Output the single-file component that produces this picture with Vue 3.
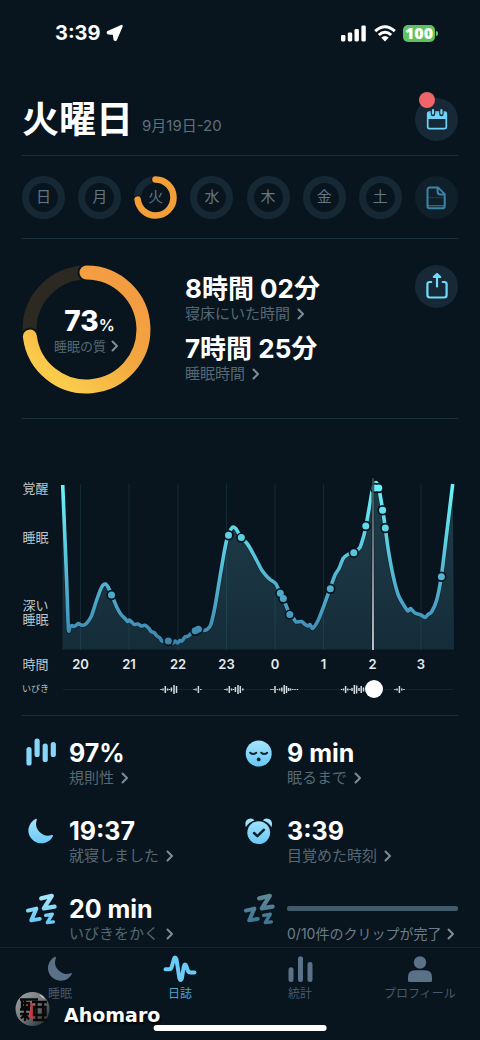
<script setup>
import { ref } from 'vue'

const days = ['日', '月', '火', '水', '木', '金', '土']
const activeDay = ref(2)
const position = ref(81)

const hours = [
  { x: 80.5, t: '20' }, { x: 129, t: '21' }, { x: 178, t: '22' }, { x: 226.5, t: '23' },
  { x: 275, t: '0' }, { x: 323.5, t: '1' }, { x: 372.5, t: '2' }, { x: 421, t: '3' }
]

const pts = [
  [62.7, 485], [64.7, 533], [66.7, 582], [68.4, 629], [70, 627], [72, 625.5], [74, 626.5], [76.5, 625], [78.5, 623.5], [81, 625],
  [85, 624.7], [88.5, 621], [91.7, 615.3], [96.7, 600], [101.7, 587], [105.5, 584], [108.3, 587.5], [111.7, 595],
  [116.7, 607], [121, 614.5], [125, 618.5], [127.5, 621.5], [129, 620], [131.5, 622], [134.3, 624.5], [138, 624], [141, 626],
  [145, 625.3], [149, 628.5], [151, 631.5], [154, 632.5], [157, 636], [160, 638], [162, 641], [168, 641.5], [173, 643], [175, 641],
  [177.7, 643], [180, 640.5], [182, 641], [185, 637], [188.5, 636], [192, 632.5], [196.7, 630], [203, 630.5], [207, 629.5],
  [210.7, 625], [215, 606.7], [220, 576.7], [224, 553.3], [226.7, 540], [228.6, 534], [232.3, 527.3], [235.7, 528.5], [239, 534],
  [241.7, 537.7], [246.7, 543], [250, 548], [253.3, 554], [257, 561], [261.7, 570], [266, 575.5], [270, 579.5], [276, 584],
  [280, 593.3], [283.3, 598.7], [289.7, 614.3], [294, 619], [296, 622], [301.7, 621.5], [304.5, 624], [308, 626], [310, 624.5],
  [312.7, 628.3], [318.3, 620], [323.3, 607.3], [330, 588.7], [335, 575], [339, 568.5], [343.3, 558.3], [348.3, 554.3],
  [354, 552.3], [360, 547.3], [364, 535], [366, 526], [370, 503.3], [372.7, 488.3], [376, 482.5], [378.7, 488],
  [382.7, 510], [385.3, 528], [388.3, 550], [393.3, 576.7], [398.3, 595], [404, 605.5], [408, 611], [410.5, 608.5], [415, 613],
  [421, 615], [425.3, 617.5], [428, 614.5], [431.7, 611.7], [436.7, 600], [441.3, 576.7], [446.7, 533.3], [452.7, 484]
]

function smooth(p) {
  let d = `M${p[0][0]} ${p[0][1]}`
  for (let i = 0; i < p.length - 1; i++) {
    const a = p[i - 1] || p[i]
    const b = p[i]
    const c = p[i + 1]
    const e = p[i + 2] || c
    const k = 8
    d += ` C${b[0] + (c[0] - a[0]) / k} ${b[1] + (c[1] - a[1]) / k} ${c[0] - (e[0] - b[0]) / k} ${c[1] - (e[1] - b[1]) / k} ${c[0]} ${c[1]}`
  }
  return d
}
const line = smooth(pts)
const area = `${line} L454 649.5 L62.5 649.5 Z`

const dots = [
  [111.5, 595], [168.3, 641], [195.2, 630.8], [198.4, 629.2], [228.5, 535.3], [241.3, 537.6], [280.3, 593.2],
  [283.3, 598.6], [289.8, 614.6], [330.3, 588.7], [353.8, 552.7], [365.8, 526], [375, 488], [378.8, 488],
  [382.6, 510.2], [385.3, 528], [441.4, 576.8]
]

const snores = [
  [161, 1], [163, 2], [165.3, 7], [167.6, 2], [169.5, 1], [171.4, 4], [174, 9], [176.5, 7],
  [194, 1], [196, 2], [198.4, 7], [200.8, 1],
  [225, 1], [227, 2], [229.3, 7], [231.6, 2], [233.5, 1], [235.4, 5], [238, 9], [240.3, 7], [242.8, 2],
  [271, 1], [273, 1], [275, 7], [277.4, 1], [279.6, 2], [281.8, 4], [284.2, 9], [286.5, 7], [288.6, 3], [290.6, 2], [292.8, 1], [295, 1], [297.4, 1],
  [341.5, 1], [343.5, 2], [345.6, 7], [347.8, 2], [350, 1], [352, 3], [354.3, 9], [356.6, 8], [359, 3], [361.2, 7], [363.5, 4],
  [395, 1], [397, 2], [399.4, 7], [401.8, 2], [404, 1]
]

const metrics = [
  { icon: 'bars', value: '97%', label: '規則性' },
  { icon: 'face', value: '9 min', label: '眠るまで' },
  { icon: 'moon', value: '19:37', label: '就寝しました' },
  { icon: 'alarm', value: '3:39', label: '目覚めた時刻' },
  { icon: 'zzz', value: '20 min', label: 'いびきをかく' },
  { icon: 'zzz', dim: true, label: '0/10件のクリップが完了' }
]

const tabs = [
  { icon: 'moon', label: '睡眠' },
  { icon: 'pulse', label: '日誌', active: true },
  { icon: 'stats', label: '統計' },
  { icon: 'person', label: 'プロフィール' }
]
</script>

<template>
  <div class="app">
    <div class="status">
      <div class="clock">
        <span>3:39</span>
        <svg width="18" height="18" viewBox="0 0 18 18"><path d="M15.600 2 L2 8.200 Q1.500 9.200 2.600 9.300 L8 9.800 L8.600 15.200 Q9 16.400 9.800 15.400 Z" fill="#fff" stroke="#fff" stroke-width="2.400" stroke-linejoin="round" /></svg>
      </div>
      <div class="signals">
        <svg width="26" height="17" viewBox="0 0 26 17" fill="#fff">
          <rect x="0" y="10" width="4.4" height="6.4" rx="1.3" /><rect x="6.8" y="7.4" width="4.4" height="9" rx="1.3" />
          <rect x="13.5" y="4" width="4.4" height="12.4" rx="1.3" /><rect x="20.4" y="0.4" width="4.4" height="16" rx="1.3" />
        </svg>
        <svg width="22" height="17" viewBox="0 0 22 17" fill="none" stroke="#fff" stroke-width="3">
          <path d="M1.2 6.2 Q11 -2.7 20.8 6.2" /><path d="M4.8 10 Q11 4.4 17.2 10" />
          <path d="M11 16.4 L7.2 12.6 Q11 9.6 14.8 12.6Z" fill="#fff" stroke="none" />
        </svg>
        <div class="battery"><span>100</span></div>
      </div>
    </div>

    <main class="content">
      <header class="head">
        <h1>火曜日</h1>
        <span class="date">9月19日-20</span>
        <button class="round" aria-label="カレンダー">
          <svg width="24" height="24" viewBox="0 0 24 24">
            <rect x="2.700" y="4" width="18.600" height="16.600" rx="1.600" fill="none" stroke="#6fd3fa" stroke-width="1.700" />
            <path d="M2.500 4.500h19v6.500h-19z" fill="#6fd3fa" />
            <path d="M8 1.500v4.500M16.400 1.500v4.500" stroke="#172936" stroke-width="4.400" stroke-linecap="round" />
            <path d="M8 2.200v3.400M16.400 2.200v3.400" stroke="#6fd3fa" stroke-width="2.200" stroke-linecap="round" />
          </svg>
          <i class="badge"></i>
        </button>
      </header>

      <nav class="days">
        <button v-for="(d, i) in days" :key="d" class="day" @click="activeDay = i">
          <svg width="43" height="43" viewBox="0 0 43 43" fill="none">
            <circle cx="21.5" cy="21.5" r="18" stroke="#172835" stroke-width="7" />
            <g v-if="i === activeDay" transform="rotate(-90 21.5 21.5)" stroke-linecap="round">
              <circle cx="21.5" cy="21.5" r="18" stroke="#08151e" stroke-width="9" pathLength="100" stroke-dasharray="73 100" />
              <circle cx="21.5" cy="21.5" r="18" stroke="#f49e38" stroke-width="6.6" pathLength="100" stroke-dasharray="73 100" />
            </g>
          </svg>
          <span>{{ d }}</span>
        </button>
        <button class="round faint" aria-label="メモ">
          <svg width="24" height="26" viewBox="0 0 24 26" fill="none" stroke="#3f83a5" stroke-width="2" stroke-linejoin="round">
            <path d="M5.500 2.600h8.700l6.500 6.500v12.100a2 2 0 0 1-2 2H5.500a2 2 0 0 1-2-2V4.600a2 2 0 0 1 2-2z" />
            <path d="M13.600 2.800v4q0 2.600 2.600 2.600h4.200" />
            <path d="M4.500 12.600h15.400" stroke-width="1" stroke-dasharray="1 1" opacity=".6" />
            <path d="M4 20.800h16" stroke-width="1" />
          </svg>
        </button>
      </nav>

      <section class="summary">
        <div class="ring">
          <svg width="129" height="129" viewBox="0 0 129 129" fill="none">
            <defs>
              <linearGradient id="quality" gradientUnits="userSpaceOnUse" x1="90" y1="20" x2="25" y2="105">
                <stop offset="0" stop-color="#f39d42" /><stop offset=".45" stop-color="#f2a73e" /><stop offset="1" stop-color="#fbcb4c" />
              </linearGradient>
            </defs>
            <circle cx="64.5" cy="64.5" r="57" stroke="#2c2923" stroke-width="14" />
            <path d="M64.5 7.5 A57 57 0 1 1 7.9 71.6" stroke="#08151e" stroke-width="18" stroke-linecap="round" />
            <path d="M64.5 7.5 A57 57 0 1 1 7.9 71.6" stroke="url(#quality)" stroke-width="14" stroke-linecap="round" />
          </svg>
          <div class="ring-text">
            <p class="score">73<small>%</small></p>
            <button class="more small">睡眠の質<svg class="chev" viewBox="0 0 8 12"><path d="M1.5 1.5 6 6 1.5 10.5" /></svg></button>
          </div>
        </div>
        <div class="times">
          <p class="big">8時間 02分</p>
          <button class="more">寝床にいた時間<svg class="chev" viewBox="0 0 8 12"><path d="M1.5 1.5 6 6 1.5 10.5" /></svg></button>
          <p class="big second">7時間 25分</p>
          <button class="more">睡眠時間<svg class="chev" viewBox="0 0 8 12"><path d="M1.5 1.5 6 6 1.5 10.5" /></svg></button>
        </div>
        <button class="round" aria-label="共有">
          <svg width="24" height="28" viewBox="0 0 24 28" fill="none" stroke="#6fdcfb" stroke-width="2.200" stroke-linecap="round" stroke-linejoin="round">
            <path d="M6.200 9H4.600a2.200 2.200 0 0 0-2.200 2.200v10.900a2.400 2.400 0 0 0 2.400 2.400h14.400a2.400 2.400 0 0 0 2.400-2.400V11.200a2.200 2.200 0 0 0-2.200-2.200h-1.600" />
            <path d="M12 13.500V3" /><path d="M8.800 4 12 1l3.200 3z" fill="#6fdcfb" />
          </svg>
        </button>
      </section>

      <section class="chart">
        <svg class="plot" viewBox="22 470 436 206">
          <defs>
            <linearGradient id="stroke" gradientUnits="userSpaceOnUse" x1="0" y1="484" x2="0" y2="645">
              <stop offset="0" stop-color="#6cf3fa" /><stop offset=".35" stop-color="#5ccfe3" /><stop offset=".75" stop-color="#4ba3c5" /><stop offset="1" stop-color="#3b83ad" />
            </linearGradient>
            <linearGradient id="fill" gradientUnits="userSpaceOnUse" x1="0" y1="484" x2="0" y2="650">
              <stop offset="0" stop-color="#1d3d48" /><stop offset=".5" stop-color="#1a3541" /><stop offset="1" stop-color="#152c39" />
            </linearGradient>
            <linearGradient id="cursor" x1="0" y1="0" x2="0" y2="1">
              <stop offset="0" stop-color="#3a4a53" /><stop offset=".3" stop-color="#777d84" /><stop offset="1" stop-color="#eae6ea" />
            </linearGradient>
          </defs>
          <path :d="area" fill="url(#fill)" />
          <line v-for="h in hours" :key="h.t" :x1="h.x" :x2="h.x" y1="484" y2="650" class="grid" />
          <path :d="line" fill="none" stroke="#08151e" stroke-width="5" opacity=".5" />
          <path :d="line" fill="none" stroke="url(#stroke)" stroke-width="3.600" stroke-linejoin="round" />
          <circle v-for="(p, i) in dots" :key="'o' + i" :cx="p[0]" :cy="p[1]" r="5.200" fill="#08151e" />
          <circle v-for="(p, i) in dots" :key="'d' + i" :cx="p[0]" :cy="p[1]" r="3.500" fill="url(#stroke)" />
          <rect x="371.300" y="478" width="3" height="172" fill="#08151e" opacity=".6" />
          <rect x="372.200" y="478" width="1.600" height="172" fill="url(#cursor)" />
          <g class="axis">
            <text x="22.500" y="493">覚醒</text>
            <text x="22.500" y="542">睡眠</text>
            <text x="22.500" y="610">深い</text>
            <text x="22.500" y="624">睡眠</text>
            <text x="22.500" y="669">時間</text>
          </g>
          <g class="hours"><text v-for="h in hours" :key="h.t" :x="h.x" y="669">{{ h.t }}</text></g>
        </svg>
        <div class="snore">
          <label for="snore">いびき</label>
          <div class="track">
            <svg viewBox="62 676 392 26">
              <line x1="63" x2="453" y1="689.500" y2="689.500" stroke="#12242f" />
              <line v-for="(s, i) in snores" :key="i" :x1="s[0]" :x2="s[0]" :y1="689.500 - s[1] / 2" :y2="689.500 + s[1] / 2" class="wave" />
            </svg>
            <input id="snore" v-model="position" type="range" min="0" max="100">
          </div>
        </div>
      </section>

      <section class="metrics">
        <div v-for="m in metrics" :key="m.label" class="metric">
          <svg class="micon" :class="{ dim: m.dim }" width="36" height="36" viewBox="0 0 36 36">
            <defs>
              <linearGradient id="ice" gradientUnits="userSpaceOnUse" x1="0" y1="4" x2="0" y2="32">
                <stop offset="0" stop-color="#a4e4fb" /><stop offset="1" stop-color="#62c5f5" />
              </linearGradient>
            </defs>
            <g v-if="m.icon === 'bars'" stroke-width="5.200" stroke-linecap="round">
              <path d="M7 12.500v13.500M15.100 4v13.500M23.200 9v13.500M31.300 7.500v10" stroke="#86d6f9" />
            </g>
            <g v-else-if="m.icon === 'face'">
              <circle cx="18.700" cy="16.500" r="13" fill="url(#ice)" />
              <path d="M10.200 15.700q3 2.800 6 0M21.200 15.700q3 2.800 6 0" fill="none" stroke="#10222d" stroke-width="1.900" stroke-linecap="round" />
              <circle cx="18.700" cy="22.400" r="1.900" fill="#10222d" />
            </g>
            <path v-else-if="m.icon === 'moon'" d="M13.800 3.800A12.900 12.900 0 1 0 31 20.900 Q31.200 19.600 29.800 20 A12 12 0 0 1 14.800 4.700 Q14.900 3.500 13.800 3.800Z" fill="url(#ice)" />
            <g v-else-if="m.icon === 'alarm'">
              <path d="M5.800 12.300Q3.800 3.600 10.800 3.400q2.200.1 3.800 1.800Q8.700 7.200 5.800 12.300zM31.600 12.300q2-8.700-5-8.900-2.200.1-3.800 1.800 5.900 2 8.800 7.100z" fill="url(#ice)" />
              <circle cx="18.700" cy="17.600" r="11.400" fill="url(#ice)" />
              <path d="m14 18 3.400 3.200 6.400-6.400" fill="none" stroke="#0c202b" stroke-width="2.500" stroke-linecap="round" stroke-linejoin="round" />
            </g>
            <g v-else fill="none" stroke-linecap="round" stroke-linejoin="round" stroke="url(#ice)">
              <path d="M19.200 5.400 29.800 2.800 21.800 15.400 32.600 13.600" stroke-width="4.200" />
              <path d="M5.900 17.600 14.400 15.600 9.200 27.400 17.800 25.900" stroke-width="3.900" />
              <path d="M23.600 22.400 30.400 21.200 25.200 29.700 31.400 28.900" stroke-width="3.200" />
            </g>
          </svg>
          <div class="mtext">
            <p v-if="m.value" class="value">{{ m.value }}</p>
            <progress v-else value="0" max="10" :aria-label="m.label"></progress>
            <button class="more" :class="{ clips: !m.value }">{{ m.label }}<svg class="chev" viewBox="0 0 8 12"><path d="M1.500 1.500 6 6 1.500 10.500" /></svg></button>
          </div>
        </div>
      </section>
    </main>

    <footer class="bottom">
      <nav class="tabs">
        <button v-for="t in tabs" :key="t.label" class="tab" :class="{ active: t.active }">
          <svg width="34" height="28" viewBox="0 0 34 28">
            <path v-if="t.icon === 'moon'" d="M11.800 1.800A12.700 12.700 0 1 0 28.900 19 Q29 17.800 27.800 18.200 A11.800 11.800 0 0 1 12.900 2.900 Q13 1.500 11.800 1.800Z" fill="#5b7188" />
            <path v-else-if="t.icon === 'pulse'" d="M2.500 14.200H6.500Q8.200 14.200 9 11L10.800 4.500Q12 0.500 13.500 4.500L16.300 22.800Q17.600 27 19 22.800L20.800 11.500Q22 7.600 23.500 11.500L24.800 15.500Q25.600 17.500 27.500 17.500H31.500" fill="none" stroke="#6acbf9" stroke-width="4" stroke-linecap="round" stroke-linejoin="round" />
            <path v-else-if="t.icon === 'stats'" d="M8 14.700v9.800M17.500 3.700v20.800M27 9.500v15" stroke="#5b7188" stroke-width="5" stroke-linecap="round" />
            <g v-else fill="#5b7188"><circle cx="17" cy="7.500" r="6.200" /><path d="M5 25.500v-3.500Q5 15.300 12 15.300h10q7 0 7 6.700V25.500q0 1.500-1.500 1.500h-21Q5 27 5 25.500z" /></g>
          </svg>
          <span>{{ t.label }}</span>
        </button>
      </nav>
      <div class="home"></div>
      <div class="mark">
        <svg width="36" height="38" viewBox="0 0 36 38">
          <defs>
            <linearGradient id="metal" x1="0" y1="0" x2="1" y2="1">
              <stop offset="0" stop-color="#a0a5a8" /><stop offset=".5" stop-color="#74787b" /><stop offset="1" stop-color="#1e2022" />
            </linearGradient>
          </defs>
          <circle cx="17.500" cy="18" r="17" fill="url(#metal)" />
          <path d="M24 3.500q4 1 6 5z" fill="#eee" />
          <path d="M11 13h4l2 4-2 4 2 5h-5M17 11v17" fill="none" stroke="#d8303c" stroke-width="1.600" />
          <g fill="none" stroke="#09090a" stroke-width="2.300">
            <path d="M5 8.500h18M6 12h9M7 9v7h7v-5M5 18.500h10M10 9v21M5 23h9M6 27.500l4-4 4 5" />
            <path d="M17 11h15M18 29h14M21.500 12v17M28 12v17M19 16h11.500v8H19z" />
          </g>
        </svg>
        <span>Ahomaro</span>
      </div>
    </footer>
  </div>
</template>

<style>
body { background: #08151e; }
</style>

<style scoped>
* { box-sizing: border-box; }
.app {
  height: 100vh;
  display: flex;
  flex-direction: column;
  background: #08151e;
  color: #fff;
  font-family: Inter, "Noto Sans CJK JP", sans-serif;
  overflow: hidden;
}
h1, p { margin: 0; }
button {
  border: 0;
  padding: 0;
  background: none;
  color: inherit;
  font: inherit;
  cursor: pointer;
}
.status {
  flex: none;
  height: 66px;
  padding: 0 42px 0 55px;
  display: flex;
  justify-content: space-between;
  align-items: center;
}
.clock { display: flex; align-items: center; gap: 5px; font-size: 20px; font-weight: 700; }
.signals { display: flex; align-items: center; gap: 7px; }
.battery {
  position: relative;
  width: 32px;
  height: 17px;
  margin-right: 3px;
  border-radius: 5px;
  background: #5ec35c;
  font-family: "Open Sans", sans-serif;
  font-size: 16px;
  line-height: 17px;
  font-weight: 800;
  text-align: center;
}
.battery::after {
  content: "";
  position: absolute;
  right: -3px;
  top: 6px;
  width: 2px;
  height: 5px;
  border-radius: 0 2px 2px 0;
  background: #5ec35c;
}
.content { flex: 1; min-height: 0; overflow: hidden; padding: 0 22px; }
.head {
  height: 90px;
  padding: 32px 0 14px;
  border-bottom: 1px solid #1b2f3d;
  display: flex;
  align-items: center;
}
h1 { font-size: 37px; line-height: 40px; font-weight: 700; }
.date { margin: 12px 0 0 9px; font-size: 15px; line-height: 20px; color: #5e707d; }
.round {
  position: relative;
  flex: none;
  width: 43px;
  height: 43px;
  border-radius: 50%;
  background: #172936;
  display: grid;
  place-items: center;
}
.head .round { margin-left: auto; }
.faint { background: #0f202b; }
.badge {
  position: absolute;
  left: 4px;
  top: -6px;
  width: 16px;
  height: 16px;
  border-radius: 50%;
  background: #ef6569;
}
.days {
  padding: 20px 0 19px;
  border-bottom: 1px solid #1b2f3d;
  display: flex;
  justify-content: space-between;
}
.day { display: grid; place-items: center; color: #647684; font-size: 15px; line-height: 20px; }
.day > * { grid-area: 1 / 1; }
.day span { padding-bottom: 2px; }
.day svg { display: block; }
.summary {
  padding: 26px 0 24px;
  border-bottom: 1px solid #1b2f3d;
  display: flex;
}
.ring { display: grid; place-items: center; flex: none; }
.ring > * { grid-area: 1 / 1; }
.ring svg { display: block; }
.ring-text { text-align: center; padding-bottom: 2px; }
.score { padding: 4px 0 0 6px; font-size: 28px; line-height: 26px; font-weight: 800; }
.score small { font-size: 16px; font-weight: 600; }
.more {
  display: flex;
  align-items: center;
  gap: 7px;
  font-size: 15px;
  line-height: 22px;
  color: #566874;
  white-space: nowrap;
}
.more.small { gap: 5px; font-size: 13px; line-height: 16px; }
.chev { width: 8px; height: 12px; flex: none; fill: none; stroke: #7d8c96; stroke-width: 2; stroke-linecap: round; stroke-linejoin: round; }
.times { flex: 1; padding: 10px 0 0 34px; }
.big { font-size: 26px; line-height: 28px; font-weight: 700; }
.second { margin-top: 10px; }
.chart { padding: 51px 0 13px; border-bottom: 1px solid #1b2f3d; }
.plot { display: block; width: 100%; }
.grid { stroke: #43869b; stroke-opacity: .18; stroke-width: 1; }
.axis { font-size: 13px; fill: #bcc6cc; }
.hours { font-size: 13px; font-weight: 600; fill: #e6eaec; text-anchor: middle; }
.snore { display: flex; align-items: center; height: 26px; padding-right: 4px; }
.snore label { width: 40px; flex: none; font-size: 9px; line-height: 12px; color: #bcc6cc; }
.track { position: relative; flex: 1; }
.track svg { display: block; width: 100%; }
.wave { stroke: #d5dce0; stroke-width: 1.500; }
.track input {
  position: absolute;
  inset: 0;
  width: 100%;
  height: 100%;
  margin: 0;
  appearance: none;
  background: none;
}
.track input::-webkit-slider-thumb {
  appearance: none;
  width: 18px;
  height: 18px;
  border-radius: 50%;
  background: #fff;
}
.metrics { padding-top: 23px; display: grid; grid-template-columns: repeat(2, minmax(0, 1fr)); row-gap: 30px; }
.metric { display: flex; height: 48px; }
.micon { flex: none; width: 36px; margin-right: 11px; margin-top: -2px; }
.micon.dim { opacity: .55; }
.mtext { flex: 1; min-width: 0; }
.value { font-size: 25px; line-height: 28px; font-weight: 700; }
progress {
  display: block;
  appearance: none;
  width: 100%;
  height: 5px;
  margin: 11px 0 12px;
  border: 0;
}
progress::-webkit-progress-bar { background: #435a68; border-radius: 2px; }
.clips { width: 100%; gap: 0; font-size: 14px; justify-content: space-between; padding-right: 3px; color: #6b7d89; }
.bottom { position: relative; flex: none; height: 93px; border-top: 1px solid #14232d; }
.tabs { display: grid; grid-template-columns: repeat(4, 1fr); padding-top: 7px; }
.tab { display: flex; flex-direction: column; align-items: center; gap: 2px; font-size: 12px; line-height: 18px; color: #47596a; }
.active { color: #4da5cf; }
.home {
  position: absolute;
  left: 50%;
  bottom: 9px;
  width: 36%;
  height: 6px;
  transform: translateX(-50%);
  border-radius: 3px;
  background: #fff;
}
.mark { position: absolute; left: 15px; bottom: 11px; display: flex; align-items: center; gap: 13px; }
.mark span {
  padding-top: 10px;
  font-family: "DejaVu Sans", sans-serif;
  font-size: 19px;
  line-height: 22px;
  font-weight: 700;
  text-shadow: 1px 2px 2px #000;
}
</style>
